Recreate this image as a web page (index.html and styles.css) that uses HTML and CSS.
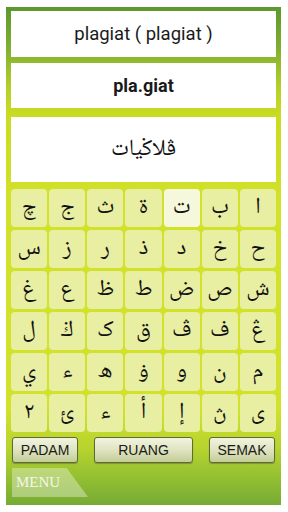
FILE: index.html
```html
<!DOCTYPE html>
<html>
<head>
<meta charset="utf-8">
<link rel="stylesheet" href="styles.css">
</head>
<body>
<div class="frame">
  <div class="box b1">plagiat ( plagiat )</div>
  <div class="box b2">pla.giat</div>
  <div class="box b3" dir="rtl">ڤلاڬيات</div>
  <div class="keys">
    <div class="key">چ</div><div class="key">ج</div><div class="key">ث</div><div class="key">ة</div><div class="key hi">ت</div><div class="key">ب</div><div class="key">ا</div>
    <div class="key">س</div><div class="key">ز</div><div class="key">ر</div><div class="key">ذ</div><div class="key">د</div><div class="key">خ</div><div class="key">ح</div>
    <div class="key">غ</div><div class="key">ع</div><div class="key">ظ</div><div class="key">ط</div><div class="key">ض</div><div class="key">ص</div><div class="key">ش</div>
    <div class="key">ل</div><div class="key">ڬ</div><div class="key">ک</div><div class="key">ق</div><div class="key">ڤ</div><div class="key">ف</div><div class="key">ڠ</div>
    <div class="key">ي</div><div class="key">ء</div><div class="key">ه</div><div class="key">ۏ</div><div class="key">و</div><div class="key">ن</div><div class="key">م</div>
    <div class="key">٢</div><div class="key">ئ</div><div class="key">ء</div><div class="key">أ</div><div class="key">إ</div><div class="key">ڽ</div><div class="key">ى</div>
  </div>
  <div class="btns">
    <div class="btn">PADAM</div>
    <div class="btn wide">RUANG</div>
    <div class="btn">SEMAK</div>
  </div>
  <div class="menu">MENU</div>
</div>
</body>
</html>
```

FILE: styles.css
```css
html, body {
  margin: 0;
  padding: 0;
  background: #ffffff;
}
.frame {
  box-sizing: border-box;
  width: 275px;
  height: 498px;
  margin: 7px 0 0 6px;
  padding: 4px 5px 8px 5px;
  display: flex;
  flex-direction: column;
  background: linear-gradient(to bottom, #5c982e 0px, #7fae30 40px, #b4d028 80px, #cadc22 110px, #d2e12a 200px, #d2e22c 400px, #b8d42e 440px, #94c032 470px, #76aa34 498px);
}
.box {
  background: #ffffff;
  display: flex;
  align-items: center;
  justify-content: center;
  color: #1a1a1a;
}
.b1 {
  height: 46px;
  font-family: Roboto, "Liberation Sans", sans-serif;
  font-size: 18.5px;
}
.b2 {
  height: 45px;
  margin-top: 6px;
  font-family: Roboto, "Liberation Sans", sans-serif;
  font-weight: bold;
  font-size: 18px;
}
.b3 {
  height: 65px;
  margin-top: 9px;
  font-family: "Noto Naskh Arabic", "Amiri", "DejaVu Sans", sans-serif;
  font-size: 23px;
  color: #111;
}
.keys {
  margin-top: 7px;
  display: grid;
  grid-template-columns: repeat(7, 1fr);
  grid-auto-rows: 38px;
  column-gap: 2px;
  row-gap: 3px;
}
.key {
  background: #e8eea2;
  border-radius: 4px;
  display: flex;
  align-items: center;
  justify-content: center;
  font-family: "Noto Naskh Arabic", "Amiri", "DejaVu Sans", sans-serif;
  font-size: 23px;
  color: #111;
}
.key.hi {
  background: #f6f8dc;
}
.btns {
  margin-top: 5px;
  height: 26px;
  display: flex;
  justify-content: space-between;
  padding: 0 1px;
}
.btn {
  box-sizing: border-box;
  width: 66px;
  height: 26px;
  border: 1px solid #5e6a38;
  border-radius: 3px;
  background: linear-gradient(to bottom, #f2f4e0 0%, #dfe4c0 50%, #c4cc98 100%);
  box-shadow: 0 1px 1px rgba(0,0,0,0.25);
  display: flex;
  align-items: center;
  justify-content: center;
  font-family: "Liberation Sans", Arial, sans-serif;
  font-size: 14px;
  color: #1a1a1a;
}
.btn.wide {
  width: 99px;
}
.menu {
  margin-top: 5px;
  width: 76px;
  height: 29px;
  margin-left: 1px;
  background: rgba(230, 240, 210, 0.45);
  clip-path: polygon(0 0, 72% 0, 100% 100%, 0 100%);
  font-family: "Liberation Serif", serif;
  font-size: 15px;
  color: #f4f6e8;
  display: flex;
  align-items: center;
  padding-left: 4px;
  box-sizing: border-box;
}
```
